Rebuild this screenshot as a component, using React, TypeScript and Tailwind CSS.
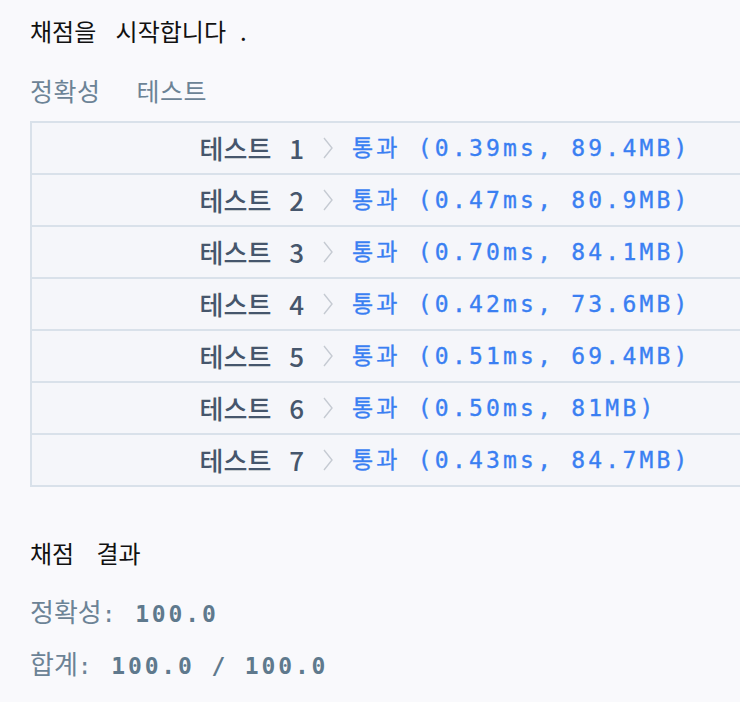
import React from "react";

const TESTS: { no: number; time: string; mem: string }[] = [
  { no: 1, time: "0.39ms", mem: "89.4MB" },
  { no: 2, time: "0.47ms", mem: "80.9MB" },
  { no: 3, time: "0.70ms", mem: "84.1MB" },
  { no: 4, time: "0.42ms", mem: "73.6MB" },
  { no: 5, time: "0.51ms", mem: "69.4MB" },
  { no: 6, time: "0.50ms", mem: "81MB" },
  { no: 7, time: "0.43ms", mem: "84.7MB" },
];

function Chevron() {
  return (
    <svg width="10" height="22" viewBox="0 0 10 22" className="shrink-0">
      <polyline points="1,1 9,11 1,21" fill="none" stroke="#c5cad2" strokeWidth="1.4" />
    </svg>
  );
}

function TestRow({ no, time, mem }: { no: number; time: string; mem: string }) {
  return (
    <div className="flex h-[52px] items-center border-b-2 border-[#d9e1ea]">
      <div className="flex w-[301px] items-center justify-end">
        <span className="font-['Noto_Sans_CJK_KR',sans-serif] text-[26px] leading-[32px] font-medium text-[#46566c] [word-spacing:12px]">
          테스트 {no}
        </span>
        <span className="ml-[19px]">
          <Chevron />
        </span>
      </div>
      <div className="pl-[19px] font-['DejaVu_Sans_Mono','Noto_Sans_CJK_KR',monospace] text-[23px] leading-[32px] tracking-[3.2px] whitespace-pre text-[#3a7ff2] [-webkit-text-stroke:0.35px]">
        통과 ({time}, {mem})
      </div>
    </div>
  );
}

export default function App() {
  return (
    <div className="min-h-screen overflow-hidden bg-[#f9f9fc] pl-[30px]">
      {/* heading */}
      <div className="pt-[15px] font-['Noto_Sans_CJK_KR',sans-serif] text-[24px] leading-[32px] text-[#111] [word-spacing:14px]">
        채점을 시작합니다<span className="ml-[14px]">.</span>
      </div>

      {/* section label */}
      <div className="mt-[27px] flex gap-[36px] font-['Noto_Sans_CJK_KR',sans-serif] text-[25px] leading-[32px] tracking-[0.5px] text-[#6c8396]">
        <span>정확성</span>
        <span>테스트</span>
      </div>

      {/* results table */}
      <div className="mt-[15px] w-[740px] border-l-2 border-t-2 border-[#d9e1ea] bg-[#f5f6fa]">
        {TESTS.map((t) => (
          <TestRow key={t.no} {...t} />
        ))}
      </div>

      {/* summary */}
      <div className="mt-[50px] font-['Noto_Sans_CJK_KR',sans-serif] text-[24px] leading-[32px] text-[#111] [word-spacing:17px]">
        채점 결과
      </div>
      <div className="mt-[26px] font-['DejaVu_Sans_Mono','Noto_Sans_CJK_KR',monospace] text-[23px] leading-[32px] tracking-[2.85px] whitespace-pre text-[#6c8396]">
        <span className="font-['Noto_Sans_CJK_KR',sans-serif] text-[26px] tracking-normal">정확성</span>: <span className="font-bold text-[#5f798d]">100.0</span>
      </div>
      <div className="mt-[17px] font-['DejaVu_Sans_Mono','Noto_Sans_CJK_KR',monospace] text-[23px] leading-[32px] tracking-[2.85px] whitespace-pre text-[#6c8396]">
        <span className="font-['Noto_Sans_CJK_KR',sans-serif] text-[26px] tracking-normal">합계</span>: <span className="font-bold text-[#5f798d]">100.0 / 100.0</span>
      </div>
    </div>
  );
}
